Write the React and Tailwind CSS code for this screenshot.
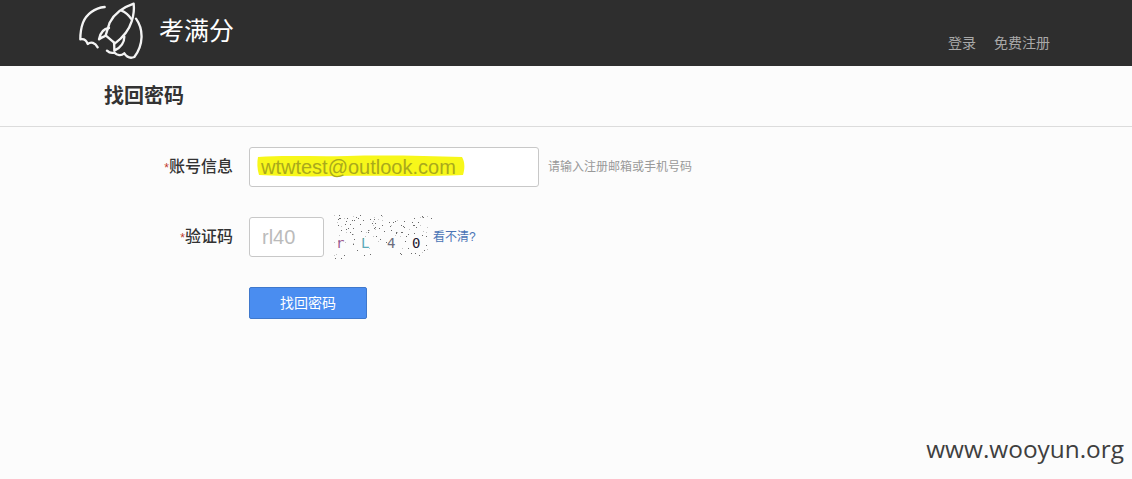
import React from 'react';

const cjk = { fontFamily: '"Liberation Sans", "Noto Sans CJK SC", sans-serif' };

const RocketLogo = () => (
    <svg width="70" height="60" viewBox="55 0 210 180" fill="none" stroke="#f4f4f4" strokeWidth="7" strokeLinecap="round" strokeLinejoin="round" className="shrink-0">
        <path d="M135 21 C105 24 80 42 70 68 C64 84 62 100 62 118 C72 116 80 120 84 132 C94 124 106 128 114 142" />
        <path d="M222 11 C190 22 164 40 150 68 L138 106 L166 130 C190 112 208 90 216 64 C222 46 224 28 222 11 Z" />
        <path d="M186 32 C196 36 206 44 216 58" />
        <path d="M148 84 C132 86 122 96 118 118 C124 112 132 110 139 107" />
        <path d="M194 110 C194 128 184 142 164 152 C164 144 164 136 163 128" />
        <path d="M229 56 C252 88 252 134 224 171 C212 176 202 172 194 160 C184 168 172 166 164 158 C156 160 148 158 142 152" />
    </svg>
);

const Header = () => (
    <header className="h-[66px] bg-[#2e2e2e] flex justify-between pl-[78px] pr-[82px]" style={cjk}>
        <div className="flex items-start">
            <RocketLogo />
            <span className="ml-[11px] mt-[15px] text-[25px] leading-[32px] text-white">考满分</span>
        </div>
        <nav className="flex gap-[18px] pt-[34px] text-[14px] leading-[18px] text-[#a9a9a9]">
            <a href="#">登录</a>
            <a href="#">免费注册</a>
        </nav>
    </header>
);

// scattered noise of the captcha image, thicker towards the top
let seed = 7;
const rand = () => {
    seed = (seed * 16807) % 2147483647;
    return seed / 2147483647;
};
const noise = [];
for (let i = 0; i < 210; i++) {
    const x = Math.floor(rand() * 98);
    const y = Math.floor(rand() * 44);
    if (y < 22 || rand() < 0.3) noise.push([x, y]);
}

const Captcha = () => (
    <div className="relative w-[99px] h-[44px] overflow-hidden shrink-0" style={{ fontFamily: '"DejaVu Sans Mono", monospace' }}>
        <svg width="99" height="44" className="absolute left-0 top-0">
            {noise.map(([x, y], i) => (
                <rect key={i} x={x} y={y} width="1" height="1" fill={i % 3 === 0 ? '#c4c4c4' : '#6a6a6a'} />
            ))}
        </svg>
        <div className="absolute left-[2px] top-[19px] flex text-[14px] leading-[18px]">
            <span className="w-[25px] text-[#9a5a90]">r</span>
            <span className="w-[26px] text-[#5aa9b8]">L</span>
            <span className="w-[25px] text-[#6d6d7d]">4</span>
            <span className="text-[#1f1730]">0</span>
        </div>
    </div>
);

const Row = ({ label, children, className }) => (
    <div className={`flex items-center ${className}`}>
        <label className="w-[233px] text-right text-[16px] leading-[22px] font-medium text-[#333]">
            <span className="text-[12px] text-[#c0392b]">*</span>
            {label}
        </label>
        <div className="ml-[16px] flex items-center">{children}</div>
    </div>
);

const App = () => {
    return (
        <div className="relative w-[1132px] h-[479px] overflow-hidden bg-[#fcfcfc]" style={cjk}>
            <Header />
            <div className="h-[61px] border-b border-[#dcdcdc] pl-[104px] flex items-center">
                <h1 className="text-[20px] leading-[28px] font-bold text-[#333]">找回密码</h1>
            </div>

            <Row label="账号信息" className="mt-[20px]">
                <div className="relative w-[290px] h-[40px] bg-white border border-[#c8c8c8] rounded-[3px] flex items-center pl-[11px] text-[20px] text-[#a9a91c]">
                    {/* marker stroke drawn over the screenshot */}
                    <svg width="208" height="24" className="absolute left-[7px] top-[6px]" fill="#f7f71a">
                        <path d="M1 3 C30 1 60 3 90 2 C130 1 170 2 205 3 C208 8 208 15 206 21 C160 23 120 21 80 22 C50 23 25 22 2 21 C0 15 0 8 1 3 Z" />
                    </svg>
                    <span className="relative leading-[24px]">wtwtest@outlook.com</span>
                </div>
                <span className="ml-[9px] text-[12px] text-[#999]">请输入注册邮箱或手机号码</span>
            </Row>

            <Row label="验证码" className="mt-[28px]">
                <div className="w-[75px] h-[40px] bg-white border border-[#c8c8c8] rounded-[3px] flex items-center pl-[12px] text-[20px] text-[#bbb]">
                    rl40
                </div>
                <div className="ml-[10px]">
                    <Captcha />
                </div>
                <a href="#" className="text-[12px] text-[#4a74b5]">看不清?</a>
            </Row>

            <div className="pl-[249px] mt-[28px]">
                <button className="w-[118px] h-[32px] bg-[#4a8df0] border border-[#3f78cc] rounded-[2px] text-white text-[14px]">
                    找回密码
                </button>
            </div>

            <div className="absolute right-[8px] top-[434px] text-[24.4px] leading-[30px] text-[#3f3f3f]" style={{ fontFamily: '"Open Sans", sans-serif' }}>
                www.wooyun.org
            </div>
        </div>
    );
};

export default App;
